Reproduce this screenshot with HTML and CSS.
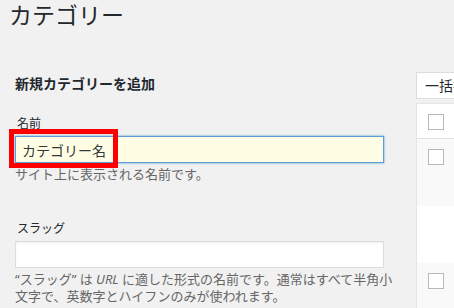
FILE: index.html
```html
<!DOCTYPE html>
<html lang="ja">
<head>
  <meta charset="utf-8">
  <title>カテゴリー</title>
  <link rel="stylesheet" href="styles.css">
</head>
<body>
  <div class="wrap">
    <h1>カテゴリー</h1>

    <div class="columns">
      <div class="col-left">
        <h2>新規カテゴリーを追加</h2>

        <div class="form-field">
          <label for="tag-name">名前</label>
          <div class="input-box">
            <input type="text" id="tag-name" class="focused" value="カテゴリー名">
            <span class="highlight"></span>
          </div>
          <p>サイト上に表示される名前です。</p>
        </div>

        <div class="form-field slug-field">
          <label for="tag-slug">スラッグ</label>
          <div class="input-box">
            <input type="text" id="tag-slug">
          </div>
          <p>“スラッグ” は <i>URL</i> に適した形式の名前です。通常はすべて半角小文字で、英数字とハイフンのみが使われます。</p>
        </div>
      </div>

      <div class="col-right">
        <div class="tablenav">
          <div class="bulk-select">一括操作</div>
        </div>
        <div class="list-table">
          <div class="row head"><span class="check"></span></div>
          <div class="row alt tall"><span class="check"></span></div>
          <div class="row plain"></div>
          <div class="row alt"><span class="check"></span></div>
        </div>
      </div>
    </div>
  </div>
</body>
</html>
```

FILE: styles.css
```css
* {
  box-sizing: border-box;
}

body {
  margin: 0;
  background: #f1f1f1;
  color: #23282d;
  font-family: "Noto Sans", "Noto Sans CJK JP", sans-serif;
  overflow: hidden;
}

.wrap {
  padding: 1px 0 0 9px;
}

h1 {
  margin: 0;
  font-size: 23px;
  font-weight: 400;
  line-height: 29px;
}

.columns {
  display: flex;
  gap: 13px;
  padding-left: 6px;
}

.col-left {
  width: 388px;
  flex-shrink: 0;
  padding-top: 44px;
}

h2 {
  margin: 0;
  font-size: 14px;
  font-weight: 700;
  line-height: 20px;
}

.form-field {
  margin-top: 21px;
}

.slug-field {
  margin-top: 36px;
}

.form-field label {
  display: block;
  padding-left: 2px;
  font-size: 12px;
  line-height: 17px;
  margin-bottom: 4px;
}

.input-box {
  position: relative;
  width: 369px;
}

.input-box input {
  display: block;
  width: 100%;
  height: 27px;
  margin: 0;
  padding: 0 6px;
  border: 1px solid #ddd;
  background: #fff;
  font-family: "Noto Sans", "Noto Sans CJK JP", sans-serif;
  font-size: 14px;
  color: #32373c;
  box-shadow: inset 0 1px 2px rgba(0, 0, 0, 0.07);
  outline: none;
}

.input-box input.focused {
  border-color: #5b9dd9;
  background: #fffee4;
  box-shadow: 0 0 2px rgba(30, 140, 190, 0.8);
}

.highlight {
  position: absolute;
  left: -6px;
  top: -7px;
  width: 109px;
  height: 39px;
  border: 5px solid #f00;
}

.form-field p {
  margin: 3px 0 0;
  font-size: 13px;
  line-height: 17.5px;
  color: #666;
}

.form-field p i {
  font-style: italic;
}

.col-right {
  flex: 1;
  padding-top: 42px;
  min-width: 0;
  overflow: hidden;
}

.bulk-select {
  height: 27px;
  padding: 0 8px;
  border: 1px solid #ddd;
  border-right: none;
  background: #fff;
  font-size: 14px;
  line-height: 25px;
  white-space: nowrap;
  overflow: hidden;
}

.list-table {
  margin-top: 4px;
  border-left: 1px solid #e5e5e5;
  border-top: 1px solid #e5e5e5;
}

.row {
  background: #fff;
  padding: 10px 0 0 11px;
  height: 57px;
}

.row.head {
  height: 35px;
  border-bottom: 1px solid #e1e1e1;
}

.row.alt {
  background: #f9f9f9;
}

.row.tall {
  height: 67px;
}

.check {
  display: block;
  width: 16px;
  height: 16px;
  border: 1px solid #b4b9be;
  background: #fff;
}
```
